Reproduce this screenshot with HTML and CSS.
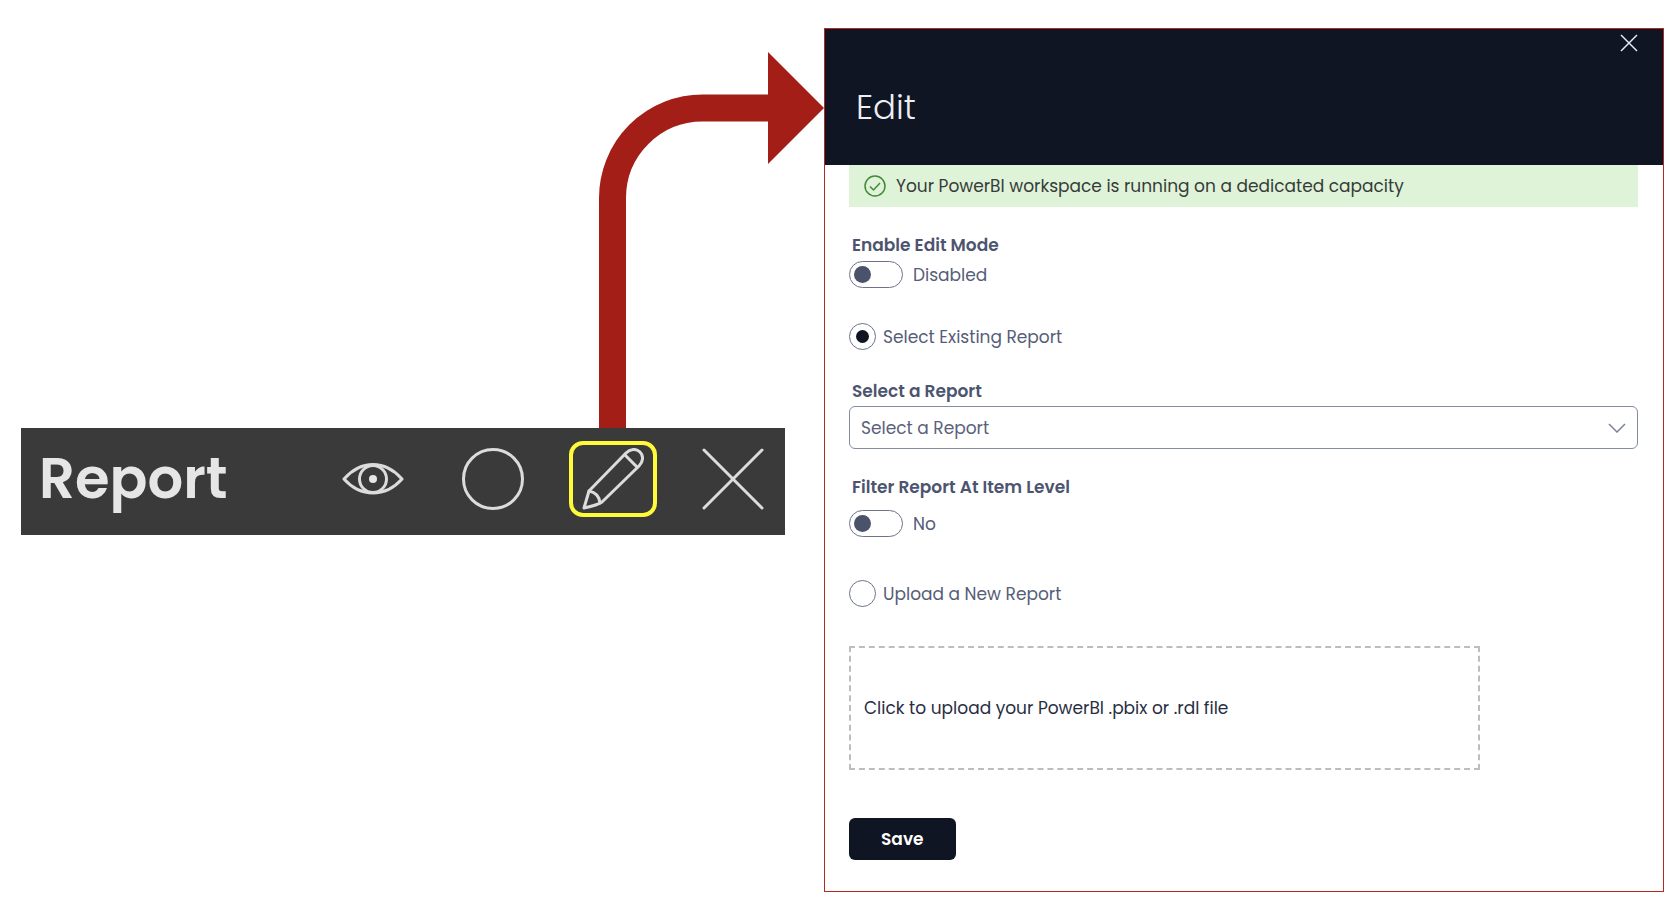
FILE: index.html
```html
<!DOCTYPE html>
<html lang="en">
<head>
<meta charset="utf-8">
<title>Edit report</title>
<link rel="stylesheet" href="styles.css">
</head>
<body>
<main class="stage">
  <section class="source">
    <svg class="arrow" width="225" height="376" viewBox="0 0 225 376" aria-hidden="true">
      <path class="arrow-shaft" d="M13.500 376V146A90 90 0 0 1 103.500 56H172"/>
      <path class="arrow-head" d="M169 0L225 56L169 112Z"/>
    </svg>
    <div class="toolbar">
      <h2 class="toolbar-title">Report</h2>
      <div class="toolbar-actions">
        <button class="tool" type="button" aria-label="Preview">
          <svg width="62" height="62" viewBox="0 0 62 62"><path d="M2 31C10 22 20 16.500 31 16.500S52 22 60 31C52 40 42 45 31 45S10 40 2 31Z"/><circle cx="31" cy="31" r="13.500"/><circle class="pupil" cx="31" cy="31" r="4"/></svg>
        </button>
        <button class="tool" type="button" aria-label="Status">
          <svg width="62" height="62" viewBox="0 0 62 62"><circle cx="31" cy="31" r="29.500"/></svg>
        </button>
        <button class="tool tool-active" type="button" aria-label="Edit">
          <svg width="62" height="62" viewBox="0 0 62 62"><path d="M2 60L7 43L44 5C48 1 54 0 58 4S61 14 57 18L20 54Q16 57 2 60Z"/><path d="M43 7L55 19M7 43Q17 45 18 55"/></svg>
        </button>
        <button class="tool" type="button" aria-label="Close">
          <svg width="62" height="62" viewBox="0 0 62 62"><path d="M2 2L60 60M60 2L2 60"/></svg>
        </button>
      </div>
    </div>
  </section>

  <section class="panel">
    <header class="panel-header">
      <button class="close" type="button" aria-label="Close">
        <svg width="18" height="18" viewBox="0 0 18 18"><path d="M1 1L17 17M17 1L1 17"/></svg>
      </button>
      <h1 class="panel-title">Edit</h1>
    </header>
    <form class="form">
      <p class="notice" role="status">
        <svg width="22" height="22" viewBox="0 0 22 22" aria-hidden="true"><circle cx="11" cy="11" r="10"/><path d="M6 11.500L9.500 15L16 8"/></svg>
        Your PowerBI workspace is running on a dedicated capacity
      </p>

      <div class="field">
        <span class="field-label" id="edit-mode">Enable Edit Mode</span>
        <label class="choice choice-switch"><input class="switch" type="checkbox" role="switch" aria-describedby="edit-mode">Disabled</label>
      </div>

      <label class="choice existing"><input class="radio" type="radio" name="source" checked>Select Existing Report</label>

      <div class="field field-report">
        <label class="field-label" for="report">Select a Report</label>
        <div class="select-wrap">
          <select class="select" id="report"><option>Select a Report</option></select>
          <svg class="chevron" width="18" height="10" viewBox="0 0 18 10" aria-hidden="true"><path d="M1 1L9 9L17 1"/></svg>
        </div>
      </div>

      <div class="field field-filter">
        <span class="field-label" id="filter">Filter Report At Item Level</span>
        <label class="choice choice-switch"><input class="switch" type="checkbox" role="switch" aria-describedby="filter">No</label>
      </div>

      <label class="choice new"><input class="radio" type="radio" name="source">Upload a New Report</label>

      <button class="upload" type="button">Click to upload your PowerBI .pbix or .rdl file</button>
      <button class="save" type="submit">Save</button>
    </form>
  </section>
</main>
</body>
</html>
```
FILE: styles.css
```css
* { box-sizing: border-box; }

body {
  margin: 0;
  background: #fff;
  color: #565d78;
  font-family: Poppins, Inter, "Open Sans", sans-serif;
  font-size: 17px;
  line-height: 24px;
}

h1, h2, p { margin: 0; }
button, select { font: inherit; }
button { cursor: pointer; }
svg { display: block; flex: none; fill: none; }

.stage {
  display: grid;
  grid-template-columns: 803fr 840fr;
  align-items: start;
  padding: 28px 16px 15px 21px;
}

/* Toolbar with the arrow that leads to the panel */
.source {
  display: flex;
  flex-direction: column;
  padding-top: 24px;
}
.arrow { align-self: flex-end; }
.arrow-shaft { stroke: #a31e17; stroke-width: 27; }
.arrow-head { fill: #a31e17; }

.toolbar {
  display: flex;
  align-items: center;
  justify-content: space-between;
  min-height: 107px;
  margin-right: 39px;
  padding: 0 8px 6px 18px;
  background: #3a3a3a;
}
.toolbar-title {
  color: #e6e6e6;
  font-size: 56px;
  font-weight: 600;
  line-height: 64px;
}
.toolbar-actions { display: flex; gap: 32px; }
.tool {
  display: flex;
  align-items: center;
  justify-content: center;
  width: 88px;
  height: 76px;
  padding: 0;
  border: 4px solid transparent;
  border-radius: 14px;
  background: none;
  stroke: #dcdcdc;
  stroke-width: 3;
  stroke-linecap: round;
  stroke-linejoin: round;
}
.tool-active { border-color: #fffb3a; }
.pupil { fill: #e6e6e6; stroke: none; }

/* Edit panel */
.panel {
  border: 1px solid #b02a22;
  background: #fff;
}
.panel-header {
  display: flex;
  flex-direction: column;
  padding: 5px 25px 38px 31px;
  background: #0f1522;
}
.close {
  align-self: flex-end;
  padding: 0;
  border: 0;
  background: none;
  stroke: #e8e9f0;
  stroke-width: 1.5;
}
.panel-title {
  margin-top: 35px;
  color: #eeeef6;
  font-size: 34px;
  font-weight: 300;
  line-height: 40px;
}

.form {
  display: flex;
  flex-direction: column;
  padding: 0 25px 31px 24px;
}
.notice {
  display: flex;
  align-items: center;
  gap: 10px;
  padding: 9px 15px;
  background: #dff3d8;
  color: #363c38;
}
.notice svg { stroke: #43893a; stroke-width: 1.5; }

.field {
  display: flex;
  flex-direction: column;
  gap: 4px;
  margin-top: 26px;
}
.field-report { gap: 3px; margin-top: 29px; }
.field-filter { gap: 11px; }
.field-label { padding-left: 3px; color: #4d5470; font-weight: 600; }

.choice {
  display: flex;
  align-items: center;
  align-self: flex-start;
  gap: 7px;
}
.choice-switch { gap: 10px; }
.existing { margin-top: 35px; }
.new { margin-top: 43px; }

.switch, .radio {
  display: flex;
  align-items: center;
  appearance: none;
  height: 27px;
  margin: 0;
  border: 1px solid #6d738b;
  border-radius: 14px;
  background: #fff;
}
.switch { width: 54px; padding-left: 4px; }
.switch::before {
  width: 17px;
  height: 17px;
  border-radius: 50%;
  background: #4b526c;
  content: "";
}
.radio { justify-content: center; width: 27px; }
.radio:checked::before {
  width: 13px;
  height: 13px;
  border-radius: 50%;
  background: #0f1522;
  content: "";
}

.select-wrap { display: grid; align-items: center; }
.select, .chevron { grid-area: 1 / 1; }
.select {
  appearance: none;
  width: 100%;
  height: 43px;
  padding: 0 40px 0 11px;
  border: 1px solid #858ba3;
  border-radius: 6px;
  background: #fff;
  color: #5a617b;
}
.chevron {
  justify-self: end;
  margin-right: 12px;
  pointer-events: none;
  stroke: #7c829b;
  stroke-width: 1.5;
}

.upload {
  width: 80%;
  min-height: 124px;
  margin-top: 39px;
  padding: 0 13px;
  border: 2px dashed #bdbdbd;
  background: #fff;
  color: #282e42;
  text-align: left;
}
.save {
  align-self: flex-start;
  margin-top: 48px;
  padding: 9px 32px;
  border: 0;
  border-radius: 6px;
  background: #0f1522;
  color: #fff;
  font-weight: 600;
}
```
